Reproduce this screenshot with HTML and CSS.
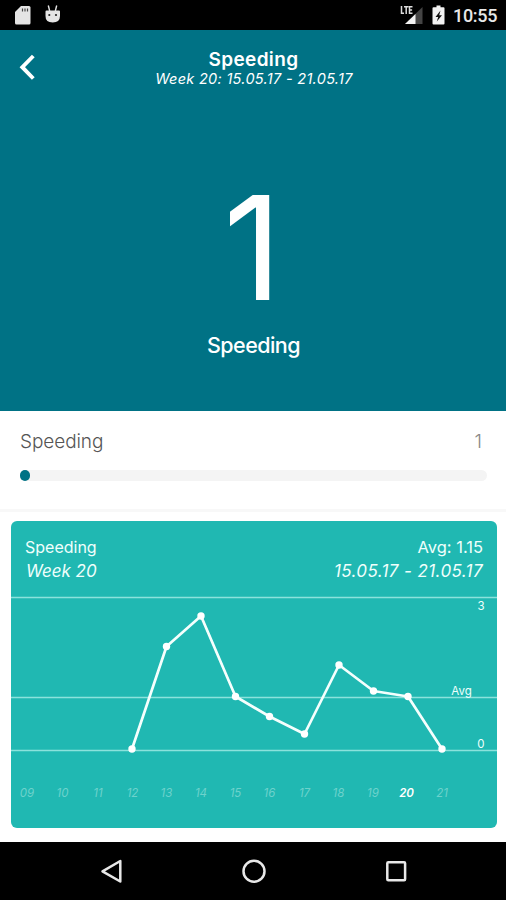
FILE: index.html
```html
<!DOCTYPE html>
<html lang="en">
<head>
<meta charset="utf-8">
<title>Speeding</title>
<link rel="stylesheet" href="styles.css">
</head>
<body>
<div class="screen">
  <div class="status">
    <svg class="status-left" width="52" height="22" viewBox="0 0 52 22">
      <path fill="#e4e4e4" d="M6 2h8q1.500 0 1.500 1.500v15.500q0 1.500-1.500 1.500H1.500q-1.500 0-1.500-1.500V8z"/>
      <path stroke="#444" stroke-width="1.200" d="M7.500 4.500v3M10 4.500v3M12.500 4.500v3"/>
      <path fill="#e4e4e4" d="M31.500 6.500h12.500q1 0 1 1V12q0 6.500-7.300 6.500T30.500 12V7.500q0-1 1-1z"/>
      <path stroke="#e4e4e4" stroke-width="1.400" d="M33.300 1.500l1.400 5.500M41.700 1.500l-1.400 5.500"/>
      <circle cx="34.300" cy="11" r="1.100" fill="#222"/><circle cx="41" cy="11" r="1.100" fill="#222"/>
    </svg>
    <div class="status-right">
      <svg width="48" height="24" viewBox="0 0 48 24">
        <path fill="#444" d="M22.500 4v17H5z"/>
        <path fill="#f2f2f2" d="M15.500 11V21H5z"/>
        <path fill="none" stroke="#ddd" stroke-width="1.500" d="M1.500 3v7.200h2.500M4 3.700h4.500M6.200 3.700V11M12.500 3.700H9.500V10.200h3M9.500 6.900h2.600"/>
        <path fill="#f2f2f2" d="M36.500 2.500h4v1.700h3q1 0 1 1V20.500q0 1-1 1h-10q-1 0-1-1V5.200q0-1 1-1h3z"/>
        <path fill="#111" d="M40.500 7.500l-5 6.500h2.700l-1.400 4.500 5.200-6.200h-2.800z"/>
      </svg>
      <span class="clock">10:55</span>
    </div>
  </div>
  <header class="hero">
    <div class="bar">
      <svg class="back" width="20" height="28" viewBox="0 0 20 28"><path fill="none" stroke="#fff" stroke-width="3.900" d="M15.300 3L4.300 14.200 15.300 25.500"/></svg>
      <div class="heading">
        <h1 class="title">Speeding</h1>
        <div class="period">Week 20: 15.05.17 - 21.05.17</div>
      </div>
    </div>
    <div class="count">1</div>
    <div class="count-label">Speeding</div>
  </header>
  <section class="stat">
    <div class="stat-row"><span>Speeding</span><span class="stat-value">1</span></div>
    <div class="track"><div class="fill"></div></div>
  </section>
  <section class="panel">
    <div class="card">
      <div class="card-head">
        <div class="card-row"><span class="card-name">Speeding</span><span class="card-avg">Avg: 1.15</span></div>
        <div class="card-row card-sub"><span class="card-week">Week 20</span><span class="card-dates">15.05.17 - 21.05.17</span></div>
      </div>
      <svg class="chart" width="486" height="232" viewBox="0 0 486 232">
        <path class="grid" d="M0 1.500h486M0 101.500h486M0 154.500h486"/>
        <polyline class="line" points="121,153 155.500,50.500 190,20 224.500,100.500 258.500,120.500 293.500,138 328,69 362.500,95 397,100.500 431,153"/>
        <g class="dots">
          <circle cx="121" cy="153" r="3.700"/><circle cx="155.500" cy="50.500" r="3.700"/><circle cx="190" cy="20" r="3.700"/><circle cx="224.500" cy="100.500" r="3.700"/><circle cx="258.500" cy="120.500" r="3.700"/><circle cx="293.500" cy="138" r="3.700"/><circle cx="328" cy="69" r="3.700"/><circle cx="362.500" cy="95" r="3.700"/><circle cx="397" cy="100.500" r="3.700"/><circle cx="431" cy="153" r="3.700"/>
        </g>
        <g class="scale"><text x="470" y="14">3</text><text x="450.500" y="99">Avg</text><text x="470" y="152">0</text></g>
        <g class="weeks">
          <text x="16" y="200.500">09</text><text x="51.500" y="200.500">10</text><text x="87" y="200.500">11</text><text x="121.500" y="200.500">12</text><text x="155.500" y="200.500">13</text><text x="190" y="200.500">14</text><text x="224.500" y="200.500">15</text><text x="258.500" y="200.500">16</text><text x="293.500" y="200.500">17</text><text x="327.500" y="200.500">18</text><text x="362" y="200.500">19</text><text class="current" x="395.500" y="200.500">20</text><text x="431" y="200.500">21</text>
        </g>
      </svg>
    </div>
  </section>
  <nav class="nav">
    <svg width="506" height="58" viewBox="0 0 506 58" fill="none" stroke="#e8e8e8" stroke-width="2.500">
      <path stroke-linejoin="round" d="M120.300 19v20.500L102.500 29.300z"/>
      <circle cx="254" cy="29.300" r="10.500"/>
      <rect x="387.300" y="20.300" width="17.800" height="18" rx="1"/>
    </svg>
  </nav>
</div>
</body>
</html>
```
FILE: styles.css
```css
* { box-sizing: border-box; }
body { margin: 0; background: #fff; font-family: Inter, Roboto, sans-serif; }
.screen { width: 506px; height: 900px; display: flex; flex-direction: column; overflow: hidden; }
.status { height: 30px; flex: none; background: #000; display: flex; justify-content: space-between; padding: 4px 9px 0 15px; }
.status-right { display: flex; gap: 5px; margin-top: -1px; }
.clock { font: 500 18px/26px Roboto, sans-serif; color: #e8e8e8; letter-spacing: -0.300px; width: 44px; white-space: nowrap; }
.hero { height: 381px; flex: none; background: #007285; color: #fff; display: flex; flex-direction: column; text-align: center; }
.bar { height: 60px; display: grid; grid-template-columns: 40px 1fr 40px; padding: 0 18px; }
.back { margin-top: 23px; }
.heading { margin-top: 18px; white-space: nowrap; display: flex; flex-direction: column; align-items: center; padding-left: 1px; }
.title { margin: 0; font-size: 19px; line-height: 23px; font-weight: 600; letter-spacing: 0.350px; }
.period { font-size: 14.500px; line-height: 16px; font-style: italic; font-weight: 400; letter-spacing: 0.300px; padding-left: 1px; }
.count { font-size: 144px; line-height: 174px; height: 174px; margin-top: 71px; margin-right: 1px; font-weight: 380; }
.count-label { font-size: 21.500px; line-height: 26px; font-weight: 500; letter-spacing: -0.550px; margin-top: -3px; padding-left: 1px; }
.stat { height: 101px; flex: none; padding: 18px 19px 0 20px; border-bottom: 3px solid #f8f8f8; color: #555; }
.stat-row { display: flex; justify-content: space-between; padding-right: 5px; font-size: 19px; line-height: 25px; font-weight: 300; letter-spacing: -0.080px; }
.stat-value { color: #888; }
.track { margin-top: 16px; height: 11px; border-radius: 6px; background: #f4f4f4; }
.fill { width: 10px; height: 11px; border-radius: 5px; background: #007285; }
.panel { height: 330px; flex: none; padding: 9px 9px 0 11px; }
.card { width: 486px; height: 307px; border-radius: 6px; background: #20b8b2; color: #effffc; overflow: hidden; }
.card-head { height: 75px; padding: 15px 14px 0 14px; }
.card-row { display: flex; justify-content: space-between; font-size: 16px; line-height: 22px; white-space: nowrap; }
.card-avg { font-size: 16.500px; }
.card-sub { font-size: 17px; line-height: 26px; font-style: italic; padding-left: 1px; }
.card-dates { letter-spacing: 0.400px; }
.chart { display: block; }
.grid { stroke: #8be2dc; stroke-width: 1.300; }
.line { fill: none; stroke: #f4fffd; stroke-width: 2.700; stroke-linejoin: round; }
.dots { fill: #fff; }
.scale { fill: #effffc; font-size: 11.500px; text-anchor: middle; }
.weeks { fill: #6dd2cc; font-size: 11.500px; font-style: italic; text-anchor: middle; }
.current { fill: #fff; font-weight: 600; }
.nav { height: 58px; flex: none; background: #000; }
```
